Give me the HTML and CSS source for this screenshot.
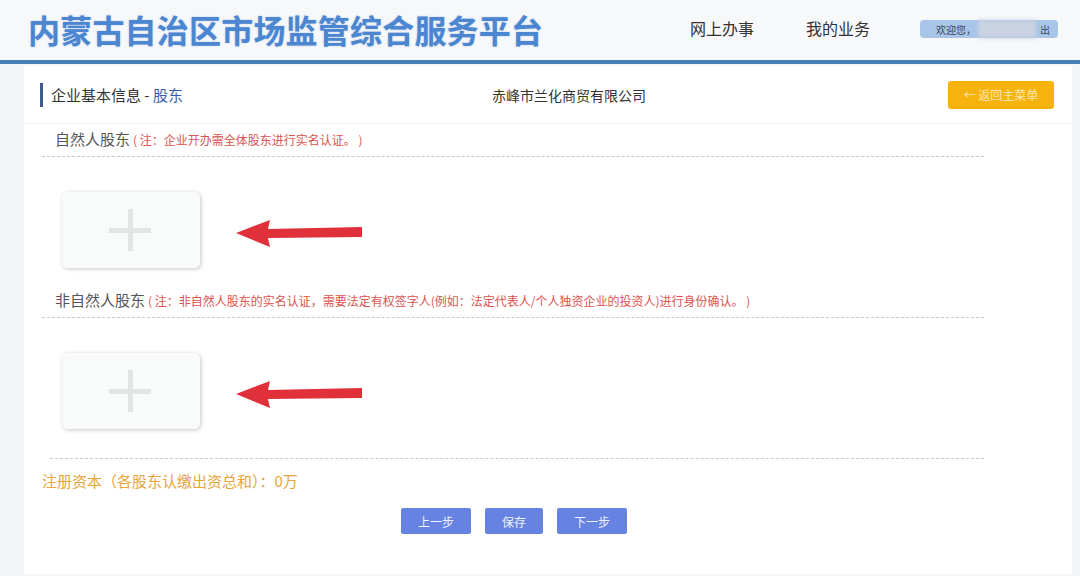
FILE: index.html
```html
<!DOCTYPE html>
<html lang="zh-CN">
<head>
<meta charset="utf-8">
<title>内蒙古自治区市场监管综合服务平台</title>
<link rel="stylesheet" href="styles.css">
</head>
<body>
<header class="topbar">
  <h1 class="brand">内蒙古自治区市场监管综合服务平台</h1>
  <nav class="nav">
    <a class="nav-item">网上办事</a>
    <a class="nav-item nav-item-last">我的业务</a>
    <div class="welcome"><span>欢迎您，</span><span class="blur"></span><span>出</span></div>
  </nav>
</header>
<main class="card">
  <div class="card-head">
    <div class="crumb">企业基本信息 - <span class="crumb-hl">股东</span></div>
    <div class="company">赤峰市兰化商贸有限公司</div>
    <button class="back">← 返回主菜单</button>
  </div>
  <section class="group">
    <div class="group-title">自然人股东<span class="note">( 注：企业开办需全体股东进行实名认证。 )</span></div>
    <div class="add-row">
      <div class="add-box"><span class="plus"></span></div>
      <svg class="arrow" width="130" height="32" viewBox="0 0 130 32"><path d="M0 17 L34 4 L32 13 L126 11 L126 21 L32 22 L34 31 Z" fill="#e0303a"/></svg>
    </div>
  </section>
  <section class="group">
    <div class="group-title">非自然人股东<span class="note">( 注：非自然人股东的实名认证，需要法定有权签字人(例如：法定代表人/个人独资企业的投资人)进行身份确认。 )</span></div>
    <div class="add-row">
      <div class="add-box"><span class="plus"></span></div>
      <svg class="arrow" width="130" height="32" viewBox="0 0 130 32"><path d="M0 17 L34 4 L32 13 L126 11 L126 21 L32 22 L34 31 Z" fill="#e0303a"/></svg>
    </div>
  </section>
  <div class="divider"></div>
  <div class="capital">注册资本（各股东认缴出资总和）：0万</div>
  <div class="actions">
    <button class="btn">上一步</button>
    <button class="btn btn-short">保存</button>
    <button class="btn">下一步</button>
  </div>
</main>
</body>
</html>
```
FILE: styles.css
```css
* { box-sizing: border-box; }
html, body { margin: 0; padding: 0; }
body {
  width: 1080px;
  height: 576px;
  overflow: hidden;
  background: #f4f5f6;
  font-family: "Noto Sans CJK SC", "Noto Sans", sans-serif;
  color: #333;
}
.topbar {
  height: 64px;
  background: #f7f8fa;
  border-bottom: 4px solid #4a80b3;
  display: flex;
  align-items: center;
  padding: 0 0 0 28px;
}
.brand {
  margin: 0;
  font-size: 32px;
  font-weight: 700;
  color: #4c86d0;
  letter-spacing: 0.2px;
  text-shadow: 0 0 2px rgba(76,134,208,0.4);
  flex: 1;
  margin-top: -2px;
}
.nav {
  display: flex;
  align-items: center;
  margin-top: -5px;
}
.nav-item {
  font-size: 16px;
  color: #333;
  margin-right: 52px;
}
.nav-item-last { margin-right: 50px; }
.welcome {
  width: 138px;
  height: 18px;
  border-radius: 4px;
  background: #a8c4e6;
  display: flex;
  align-items: center;
  font-size: 10px;
  color: #3a4a66;
  padding-left: 16px;
  margin-right: 22px;
  margin-top: 3px;
}
.blur {
  width: 58px;
  height: 18px;
  background: #c9d3e2;
  margin: 0 4px 0 2px;
  filter: blur(2px);
}
.card {
  margin: 2px 8px 0 24px;
  height: 508px;
  background: #fff;
}
.card-head {
  height: 58px;
  display: flex;
  align-items: center;
  border-bottom: 1px solid #f1f2f4;
  padding: 0 18px 0 16px;
}
.crumb {
  border-left: 3px solid #3d5a8a;
  padding-left: 8px;
  font-size: 15px;
  line-height: 24px;
  color: #333;
  width: 452px;
}
.crumb-hl { color: #3b5da8; }
.company {
  font-size: 14px;
  color: #333;
  flex: 1;
}
.back {
  width: 106px;
  height: 28px;
  border: none;
  border-radius: 3px;
  background: #f6b30d;
  color: #fde7b0;
  font-family: inherit;
  font-size: 12px;
  padding: 0;
}
.group { padding: 0 0 0 18px; }
.group-title {
  width: 942px;
  border-bottom: 1px dashed #c8c8c8;
  font-size: 15px;
  color: #555;
  padding: 4px 0 5px 13px;
  line-height: 22px;
}
.note {
  font-size: 12px;
  color: #d9534f;
  margin-left: 3px;
}
.add-row {
  display: flex;
  align-items: flex-start;
  padding: 35px 0 0 20px;
  height: 128px;
}
.add-box {
  width: 138px;
  height: 76px;
  background: #f9fafa;
  border-radius: 5px;
  box-shadow: 1px 1px 4px rgba(0,0,0,0.22);
  position: relative;
}
.plus {
  position: absolute;
  left: 47px;
  top: 17px;
  width: 42px;
  height: 42px;
}
.plus::before, .plus::after {
  content: "";
  position: absolute;
  background: #e3e4e5;
}
.plus::before { left: 0; top: 19px; width: 42px; height: 5px; }
.plus::after { left: 19px; top: 0; width: 5px; height: 42px; }
.arrow { margin: 24px 0 0 36px; }
.group + .group .add-row { height: 140px; }
.divider {
  width: 934px;
  margin-left: 26px;
  border-bottom: 1px dashed #c8c8c8;
}
.capital {
  font-size: 15px;
  color: #e8a33a;
  padding: 10px 0 0 18px;
  line-height: 24px;
}
.actions {
  display: flex;
  gap: 14px;
  padding: 15px 0 0 377px;
}
.btn {
  width: 70px;
  height: 26px;
  border: none;
  border-radius: 2px;
  background: #6783e2;
  color: #eef2ff;
  font-family: inherit;
  font-size: 12px;
  padding: 0;
}
.btn-short { width: 58px; }
```
